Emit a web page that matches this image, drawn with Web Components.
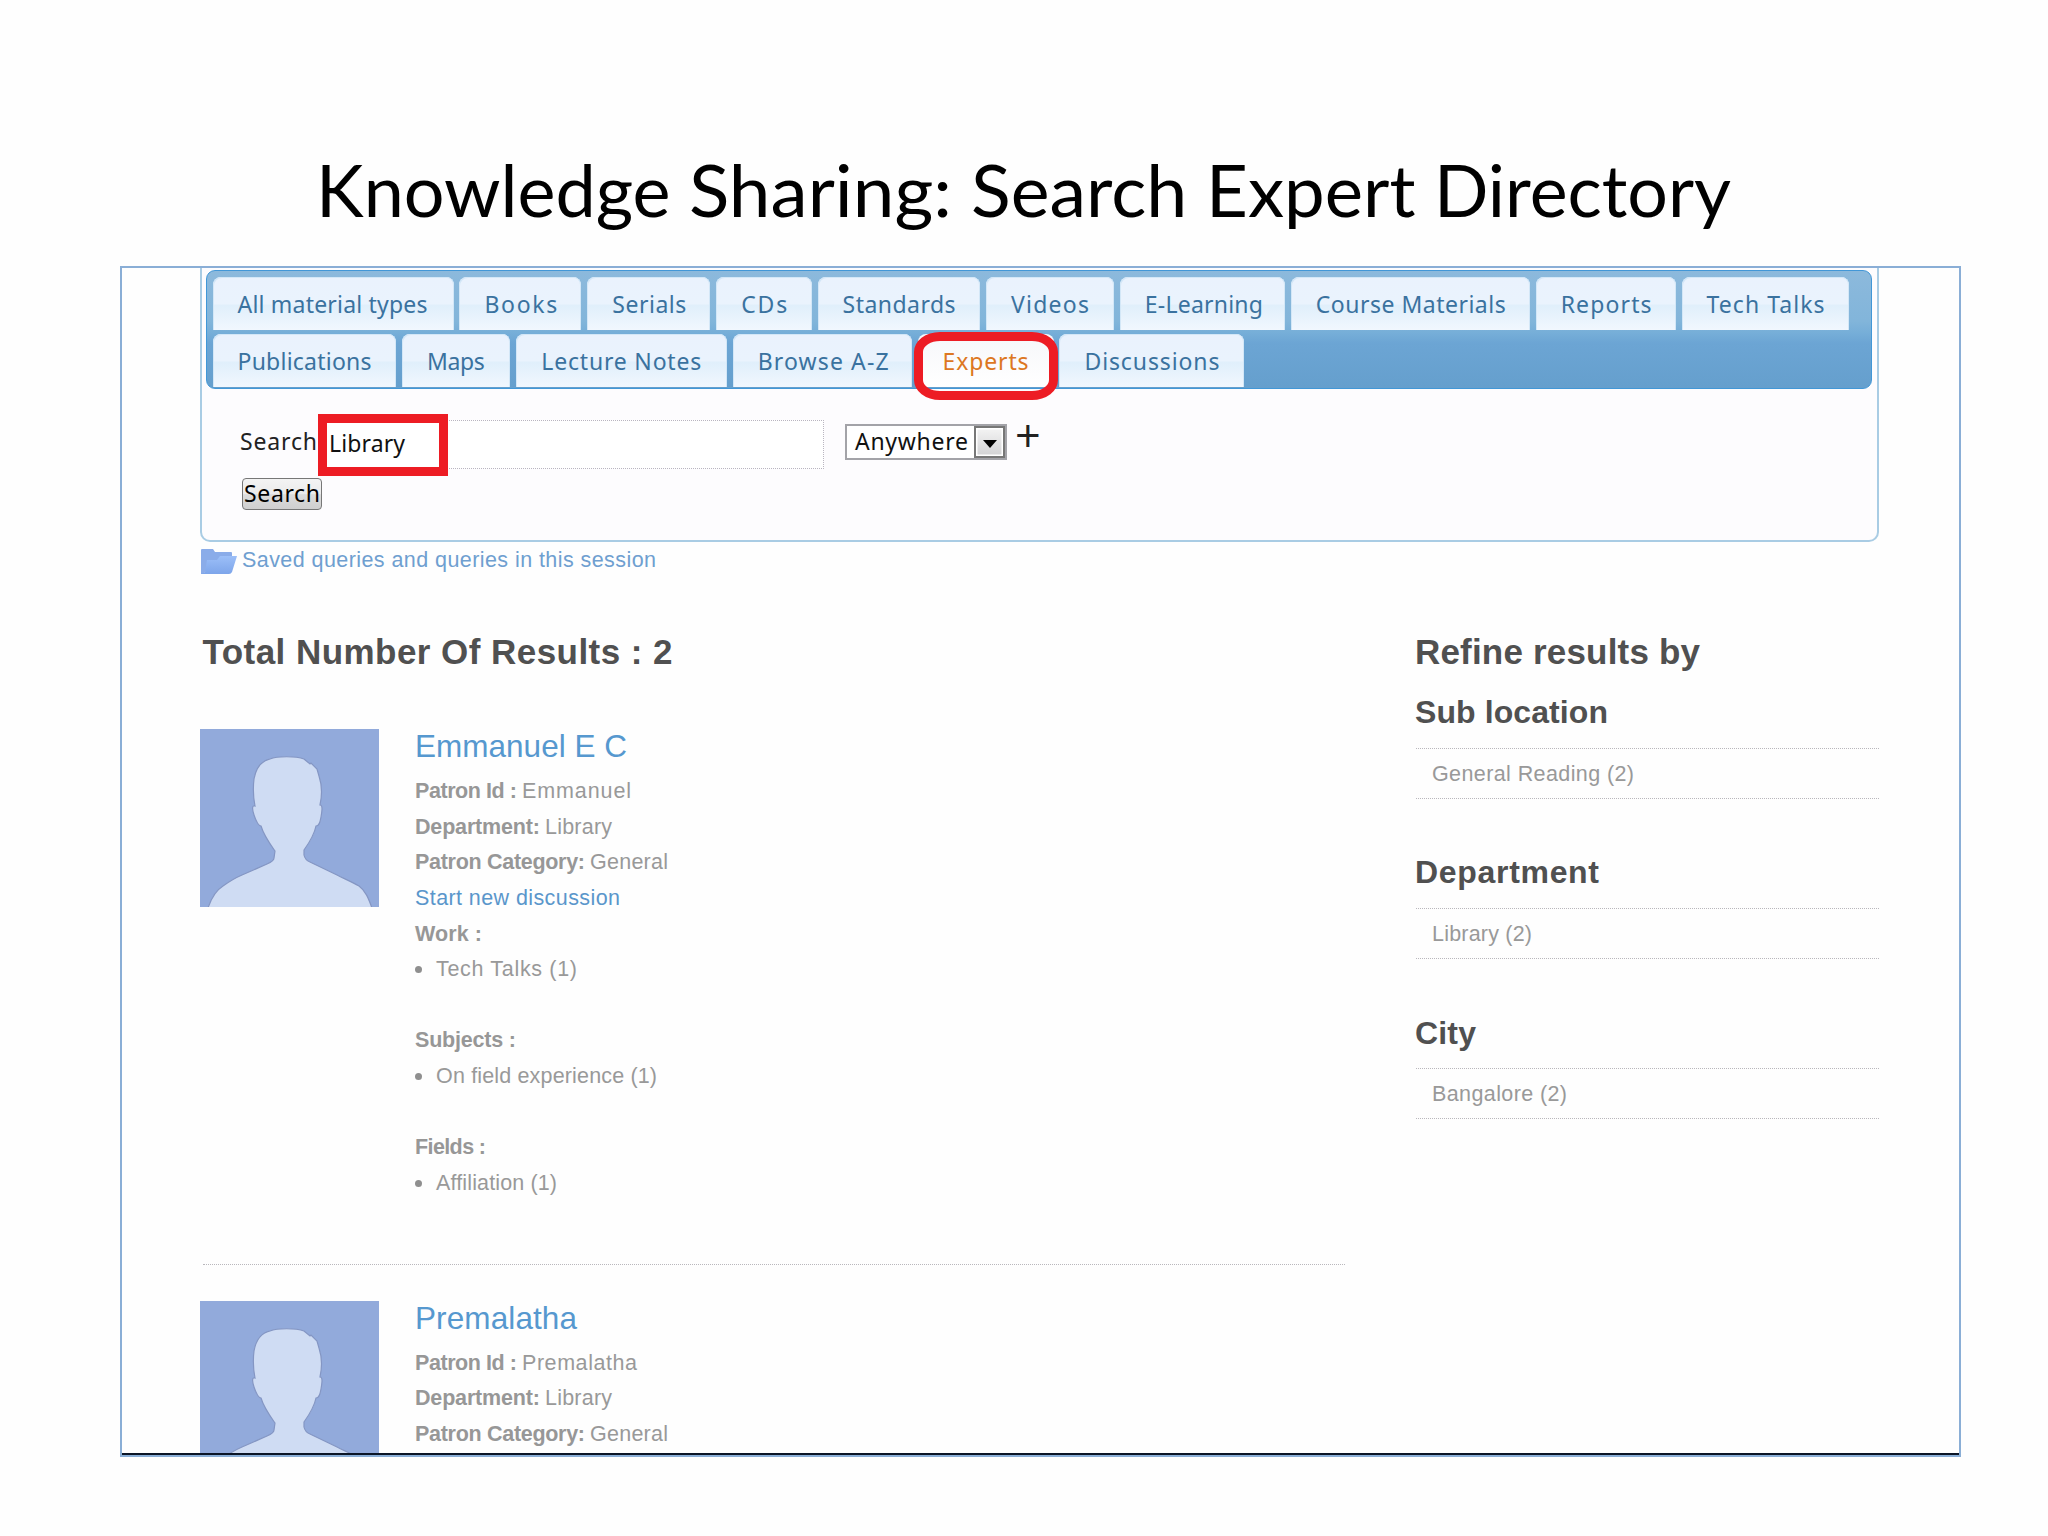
<!DOCTYPE html>
<html lang="en">
<head>
<meta charset="utf-8">
<title>Knowledge Sharing: Search Expert Directory</title>
<style>
html,body{margin:0;padding:0;background:#fff}
body{width:2048px;height:1536px;overflow:hidden;font-family:"Liberation Sans",Arial,sans-serif}
</style>
</head>
<body>
<slide-page>
  <slide-title slot="title">Knowledge Sharing: Search Expert Directory</slide-title>
  <search-panel></search-panel>
  <saved-link></saved-link>
  <result-columns></result-columns>
</slide-page>
<script>
const UI = '"Noto Sans","Open Sans",sans-serif';
function define(name, html, after) {
  customElements.define(name, class extends HTMLElement {
    connectedCallback() {
      if (this.shadowRoot) return;
      const t = document.createElement('template');
      t.innerHTML = typeof html === 'function' ? html(this) : html;
      this.attachShadow({mode: 'open'}).append(t.content.cloneNode(true));
      if (after) after(this);
    }
  });
}

/* One line of text tracked out to a given width. */
define('fit-text', '<style>:host{display:inline-block;white-space:pre;vertical-align:top}span{display:inline-block}</style><span><slot></slot></span>', el => {
  const s = el.shadowRoot.querySelector('span');
  const w = +el.getAttribute('w');
  const n = el.textContent.length;
  const nat = s.getBoundingClientRect().width;
  s.style.letterSpacing = ((w - nat) / (n - 1)).toFixed(3) + 'px';
  el.style.width = w + 'px';
});

/* Heading whose words are condensed one by one to their column widths. */
const wordWidths = [373, 282, 235, 228, 297];
define('slide-title', el => `<style>
:host{display:flex;color:#000;font:400 71.5px/100px Lato,sans-serif;height:100px;white-space:pre}
span{display:inline-block;transform-origin:0 0}
</style>` + el.textContent.split(' ').map((w, i, a) => `<div><span>${w}${i < a.length - 1 ? ' ' : ''}</span></div>`).join(''), el => {
  el.shadowRoot.querySelectorAll('span').forEach((s, i) => {
    s.style.transform = `scaleX(${wordWidths[i] / s.getBoundingClientRect().width})`;
    s.parentNode.style.width = wordWidths[i] + 'px';
  });
});

define('nav-tab', el => `<style>
:host{display:block;box-sizing:border-box;height:53.5px;border-radius:8px 8px 0 0;padding-left:25px;
background:linear-gradient(#eaf2fd 0,#eaf3fd 50%,#e0effb 54%,#f1f7fe 100%);box-shadow:inset 1px 1px 0 #d3e7f7,inset -1px 0 0 #d3e7f7;
color:#3a729f;font:23px/54px ${UI}}
:host([active]){background:linear-gradient(#f6f7fa,#fff);box-shadow:none;color:#dd7722;position:relative}
.ring{position:absolute;left:-4px;top:-2px;width:126px;height:50px;border:9px solid #ed1c24;border-radius:26px/20px}
</style><fit-text w="${el.getAttribute('w')}">${el.getAttribute('label')}</fit-text>${el.hasAttribute('active') ? '<div class="ring"></div>' : ''}`,
  el => { el.style.width = el.getAttribute('box') + 'px'; });

const rows = [
  [['All material types',241,190],['Books',122,73],['Serials',123,74],['CDs',95.5,46],['Standards',162.5,113],['Videos',128,78],['E-Learning',165,118],['Course Materials',239,190],['Reports',140,91],['Tech Talks',167.5,118]],
  [['Publications',183.5,134],['Maps',108.5,58],['Lecture Notes',210.5,160],['Browse A-Z',179,131],['Experts',136,86],['Discussions',184.5,135]]
];
define('nav-bar', `<style>
:host{display:flex;flex-direction:column;gap:3.5px;box-sizing:border-box;width:1666px;height:119px;padding:5.5px 0 0 5.5px;
border:1.5px solid #4297d7;border-radius:9px;background:linear-gradient(#8cb9dc 0,#82b5da 50px,#76aed8 62px,#6ca5d4 72px,#659fcd 100%)}
div{display:flex;gap:5.9px;height:53.5px}
</style>` + rows.map(r => '<div>' + r.map(t => `<nav-tab label="${t[0]}" box="${t[1]}" w="${t[2]}"${t[0] === 'Experts' ? ' active' : ''}></nav-tab>`).join('') + '</div>').join(''));

define('search-form', `<style>
:host{display:block;color:#222;font:23px/40px ${UI};padding:31px 0 0 34px}
.row{display:flex;height:49px;align-items:flex-start}
.lab{width:81px;padding-top:1px}
.field{position:relative;box-sizing:border-box;width:503px;height:49px;border:1.5px dotted #b9b5c0;background:#fff;color:#111;padding-left:7px;line-height:44px}
.box{position:absolute;left:-4px;top:-7px;width:112px;height:44px;border:9px solid #ed1c24}
.sel{display:flex;box-sizing:border-box;width:162px;height:36px;border:2px solid #a3a3a8;background:#fff;margin:4px 0 0 21px;padding-left:8px;line-height:31px;color:#111}
.btn{box-sizing:border-box;width:31px;height:32px;margin-left:6px;border:2px solid #777;background:linear-gradient(#f4f4f4,#d2d2d4);box-shadow:inset 0 0 0 1.5px #fff;display:flex;align-items:center;justify-content:center;padding-top:4px}
.plus{font:400 45px/49px "Open Sans",sans-serif;color:#222;margin:-10px 0 0 8px}
button{display:block;box-sizing:border-box;width:80px;height:32px;margin:9px 0 0 2px;padding:0 0 3px 1px;border:1.5px solid #777;border-radius:4px;background:linear-gradient(#f3f3f3 0,#ebebeb 50%,#dcdcdc 52%,#cfcfcf);font:23px/26px ${UI};color:#000;text-align:left}
</style>
<div class="row"><span class="lab"><fit-text w="77">Search</fit-text></span>
<div class="field"><fit-text w="76">Library</fit-text><div class="box"></div></div>
<div class="sel"><fit-text w="113">Anywhere</fit-text><span class="btn"><svg width="14" height="8" viewBox="0 0 14 8"><path d="M0 0H14L7 8Z"/></svg></span></div>
<span class="plus">+</span></div>
<button><fit-text w="76">Search</fit-text></button>`);

define('search-panel', `<style>
:host{display:block;box-sizing:border-box;width:1679px;height:274px;margin-left:78px;border:2px solid #a9cce4;border-top:0;border-radius:0 0 10px 10px;background:#fdfcfe;padding:2px 0 0 4px}
</style><nav-bar></nav-bar><search-form></search-form>`);

define('saved-link', `<style>
:host{display:flex;margin:6px 0 0 79px;height:28px;color:#6f9fd0;font-size:21.5px;line-height:24px}
svg{display:block;margin-right:5px}
</style><svg width="36" height="27" viewBox="0 0 36 27"><defs><linearGradient id="g" x1="0" y1="0" x2="0" y2="1"><stop offset="0" stop-color="#9cbff8"/><stop offset="1" stop-color="#7da5ea"/></linearGradient></defs><path d="M0 2Q0 1 1 1H12L14 4H30Q31 4 31 5V12L6 22 2 26H0Z" fill="#8aace9"/><path d="M6 12H16L19 8H36L31 24Q30 26 28 26H0L4 24Z" fill="url(#g)"/></svg><fit-text w="414">Saved queries and queries in this session</fit-text>`);

define('user-avatar', `<style>:host{display:block;width:179px;height:178px}svg{display:block}</style>
<svg width="179" height="178" viewBox="0 0 179 178"><path fill="#92aadb" d="M0 0H179V178H0Z"/><path fill="#cfdcf3" stroke="#8496c3" stroke-width="1.2" d="M8 179C11 170 15 162 23 157 30 152 35 149 42 146L67 135Q74 132 74 129L75 122C70 115 64 107 61 97 58 97 56 92 54 86 52 80 52 76 55 77 53 67 53 58 54 50 56 39 61 32 70 30 77 27 96 27 104 30L110 35 111 34 117 40 119 47C122 56 122 67 120 76 123 76 122 82 121 88 120 94 119 97 116 97 114 107 109 114 104 121V126Q105 131 110 133L137 146C145 150 152 153 159 157 166 162 169 171 172 179Z"/></svg>`);

define('field-line', el => `<style>
:host{display:flex;height:35.65px;line-height:35.65px;font-size:21.5px;color:#999}
:host([link]){color:#5a96cb}b{color:#979797}
b{font-weight:700;margin-right:5px}
i{width:7px;height:7px;border-radius:50%;background:#8f8f8f;margin:14px 14px 0 0}
</style>` + (el.hasAttribute('bullet') ? '<i></i>' : '')
 + (el.hasAttribute('name') ? `<b><fit-text w="${el.getAttribute('nw')}">${el.getAttribute('name')}</fit-text></b>` : '')
 + (el.hasAttribute('value') ? `<fit-text w="${el.getAttribute('w')}">${el.getAttribute('value')}</fit-text>` : ''));

define('expert-card', el => `<style>
:host{display:flex;gap:36px}
h3{margin:0 0 5px;height:40px;font:400 31.5px/34px "Liberation Sans",sans-serif;color:#5698cf}
</style><user-avatar></user-avatar><div>
<h3><fit-text w="${el.getAttribute('tw')}">${el.getAttribute('title')}</fit-text></h3>
<field-line name="Patron Id :" nw="102" value="${el.getAttribute('patron')}" w="${el.getAttribute('pw')}"></field-line>
<field-line name="Department:" nw="125" value="Library" w="67"></field-line>
<field-line name="Patron Category:" nw="170" value="General" w="78"></field-line>
<field-line link value="Start new discussion" w="205"></field-line>
<slot></slot></div>`);

define('facet-group', el => `<style>
:host{display:block;height:160.4px}
h4{margin:0;height:36.5px;font:700 32px/36px "Liberation Sans",sans-serif;color:#505050}
div{box-sizing:border-box;width:463px;height:51px;margin:17px 0 0 1px;border:dotted #b9b7bc;border-width:1.5px 0;padding-left:16px;font-size:21.5px;line-height:50.5px;color:#999}
</style><h4><fit-text w="${el.getAttribute('tw')}">${el.getAttribute('title')}</fit-text></h4><div><fit-text w="${el.getAttribute('w')}">${el.getAttribute('value')}</fit-text></div>`);

define('result-columns', `<style>
:host{display:flex;margin:53px 0 0 79px;color:#999}
main{width:1214px}
h2{margin:0;height:46px;font:700 35px/46px "Liberation Sans",sans-serif;color:#505050}
main h2{padding-left:1.5px}
.list{padding-top:54px;margin-left:-1px}
hr{margin:0 0 35.5px 3px;width:1142px;border:0;border-top:1.5px dotted #b9b7bc}
expert-card.first{height:535px}
field-line.gap{margin-top:35.65px}
aside{width:464px}
aside h2{margin-bottom:19px}
</style>
<main><h2><fit-text w="470">Total Number Of Results : 2</fit-text></h2>
<div class="list">
<expert-card class="first" title="Emmanuel E C" tw="212" patron="Emmanuel" pw="109">
<field-line name="Work :" nw="67"></field-line><field-line bullet value="Tech Talks (1)" w="141"></field-line>
<field-line class="gap" name="Subjects :" nw="101"></field-line><field-line bullet value="On field experience (1)" w="221"></field-line>
<field-line class="gap" name="Fields :" nw="71"></field-line><field-line bullet value="Affiliation (1)" w="121"></field-line>
</expert-card><hr>
<expert-card title="Premalatha" tw="162" patron="Premalatha" pw="115"></expert-card>
</div></main>
<aside><h2><fit-text w="285">Refine results by</fit-text></h2>
<facet-group title="Sub location" tw="193" value="General Reading (2)" w="202"></facet-group>
<facet-group title="Department" tw="184" value="Library (2)" w="100"></facet-group>
<facet-group title="City" tw="61" value="Bangalore (2)" w="135"></facet-group></aside>`);

define('slide-page', `<style>
:host{display:flex;flex-direction:column;box-sizing:border-box;width:2048px;height:1536px;background:#fefefe;padding:139px 0 0 120px}
.t{height:127px;padding-left:196px}
.frame{box-sizing:border-box;width:1841px;height:1191px;border:2px solid #8aaed6;background:#fefefe;overflow:hidden;display:flex;flex-direction:column}
.clip{height:1185px;overflow:hidden;border-bottom:2.5px solid #0b1526}
</style><div class="t"><slot name="title"></slot></div><div class="frame"><div class="clip"><slot></slot></div></div>`);
</script>
</body>
</html>
